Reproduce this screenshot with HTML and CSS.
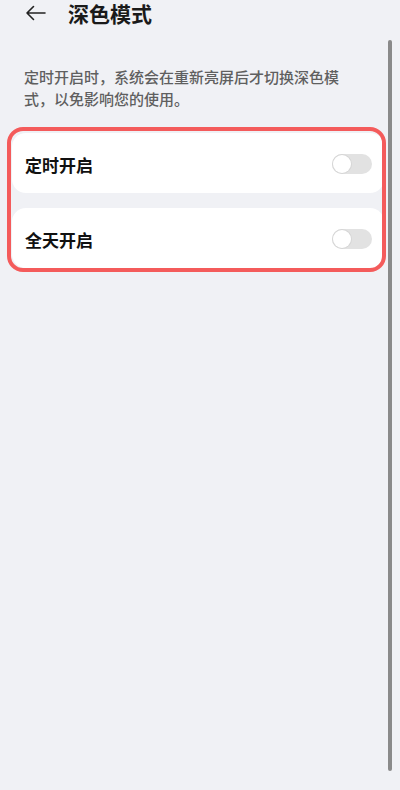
FILE: index.html
```html
<!DOCTYPE html>
<html lang="zh-CN">

<head>
  <meta charset="UTF-8">
  <meta name="viewport" content="width=device-width, initial-scale=1.0">
  <title>深色模式</title>
  <link rel="stylesheet" href="styles.css">
</head>

<body>
  <header class="topbar">
    <svg class="back" width="21" height="16" viewBox="0 0 21 16">
      <path d="M20 8H2M8.5 1.5L2 8l6.5 6.5" fill="none" stroke="#222" stroke-width="1.6" stroke-linecap="round" stroke-linejoin="round"/>
    </svg>
    <h1 class="title">深色模式</h1>
  </header>

  <main>
    <p class="desc">定时开启时，系统会在重新亮屏后才切换深色模式，以免影响您的使用。</p>

    <!-- 开关列表 -->
    <section class="group">
      <div class="card">
        <span class="label">定时开启</span>
        <span class="switch"><span class="knob"></span></span>
      </div>
      <div class="card">
        <span class="label">全天开启</span>
        <span class="switch"><span class="knob"></span></span>
      </div>
      <div class="mark"></div>
    </section>
  </main>

  <div class="scrollbar"></div>
</body>

</html>
```

FILE: styles.css
```css
* {
  box-sizing: border-box;
  margin: 0;
  padding: 0;
  font-family: "Noto Sans CJK SC", "Noto Sans", sans-serif;
}

body {
  background-color: #f0f1f5;
  color: #1a1a1a;
  width: 400px;
  height: 790px;
  overflow: hidden;
}

.topbar {
  display: flex;
  align-items: center;
  height: 26px;
  padding-left: 25px;
}

.back {
  flex: none;
}

.title {
  margin-left: 22px;
  font-size: 21px;
  font-weight: bold;
  line-height: 26px;
  color: #1a1a1a;
}

.desc {
  margin-top: 40px;
  padding: 0 40px 0 24px;
  font-size: 15px;
  font-weight: 500;
  line-height: 22px;
  color: #5f5f5f;
}

.group {
  position: relative;
  display: flex;
  flex-direction: column;
  gap: 15px;
  margin: 23px 16px 0 12px;
}

.card {
  display: flex;
  align-items: center;
  justify-content: space-between;
  height: 60px;
  padding: 2px 12px 0 13px;
  background: white;
  border-radius: 14px;
}

.label {
  font-size: 17px;
  font-weight: bold;
  color: #111;
}

.switch {
  position: relative;
  width: 40px;
  height: 20px;
  border-radius: 10px;
  background: #e2e2e2;
}

.knob {
  position: absolute;
  left: 1px;
  top: 1px;
  width: 18px;
  height: 18px;
  border-radius: 50%;
  background: white;
  box-shadow: 0 0 0 1px #d6d6d6;
}

.mark {
  position: absolute;
  top: -6px;
  left: -5px;
  right: -2px;
  bottom: -4px;
  border: 4px solid #f45b5b;
  border-radius: 16px;
  pointer-events: none;
}

.scrollbar {
  position: fixed;
  top: 40px;
  left: 388px;
  width: 4px;
  height: 731px;
  border-radius: 2px;
  background: #8a8a8a;
}
```
